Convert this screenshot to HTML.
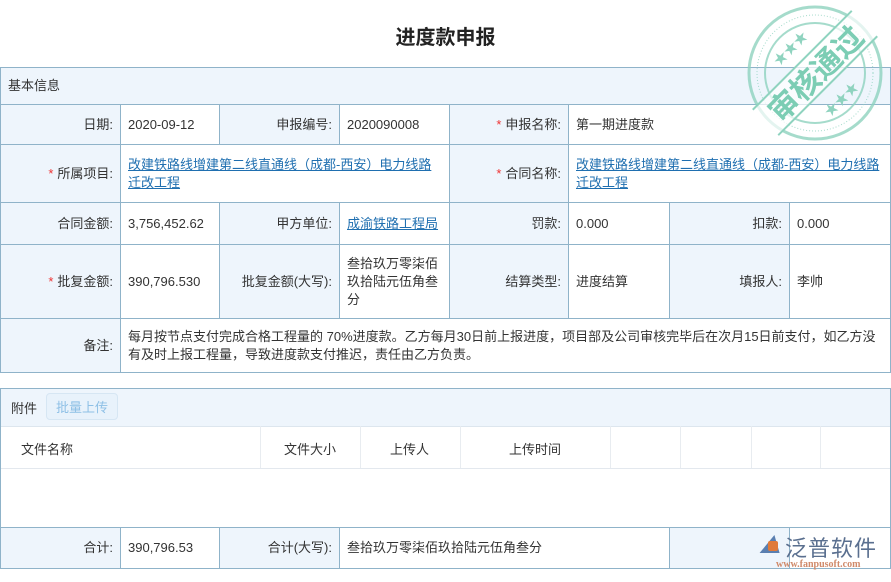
<!DOCTYPE html>
<html><head><meta charset="utf-8"><style>
body{margin:0;width:891px;height:582px;background:#fff;font-family:"Liberation Sans","Noto Sans CJK SC",sans-serif;font-size:13px;color:#333;position:relative;overflow:hidden}
.c{position:absolute;box-sizing:border-box;border:1px solid #8fb3c9;display:flex;align-items:center;padding:0 7px;line-height:18px}
.l{background:#eef5fc;justify-content:flex-end;text-align:right}
.v{background:#fff}
.r{color:#e33;margin-right:4px}
a{color:#1f6fb0;text-decoration:underline}
.t{position:absolute;font-size:13px}
</style></head><body>
<div style="position:absolute;left:0;top:21px;width:891px;text-align:center;font-size:20px;font-weight:bold;color:#222">进度款申报</div>

<div class="c l" style="left:0;top:67px;width:891px;height:38px;justify-content:flex-start">基本信息</div>

<div class="c l" style="left:0;top:104px;width:121px;height:41px">日期:</div>
<div class="c v" style="left:120px;top:104px;width:100px;height:41px">2020-09-12</div>
<div class="c l" style="left:219px;top:104px;width:121px;height:41px">申报编号:</div>
<div class="c v" style="left:339px;top:104px;width:111px;height:41px">2020090008</div>
<div class="c l" style="left:449px;top:104px;width:120px;height:41px"><span class="r">*</span>申报名称:</div>
<div class="c v" style="left:568px;top:104px;width:323px;height:41px">第一期进度款</div>

<div class="c l" style="left:0;top:144px;width:121px;height:59px"><span class="r">*</span>所属项目:</div>
<div class="c v" style="left:120px;top:144px;width:330px;height:59px"><a>改建铁路线增建第二线直通线（成都-西安）电力线路迁改工程</a></div>
<div class="c l" style="left:449px;top:144px;width:120px;height:59px"><span class="r">*</span>合同名称:</div>
<div class="c v" style="left:568px;top:144px;width:323px;height:59px"><a>改建铁路线增建第二线直通线（成都-西安）电力线路迁改工程</a></div>

<div class="c l" style="left:0;top:202px;width:121px;height:43px">合同金额:</div>
<div class="c v" style="left:120px;top:202px;width:100px;height:43px">3,756,452.62</div>
<div class="c l" style="left:219px;top:202px;width:121px;height:43px">甲方单位:</div>
<div class="c v" style="left:339px;top:202px;width:111px;height:43px"><a>成渝铁路工程局</a></div>
<div class="c l" style="left:449px;top:202px;width:120px;height:43px">罚款:</div>
<div class="c v" style="left:568px;top:202px;width:102px;height:43px">0.000</div>
<div class="c l" style="left:669px;top:202px;width:121px;height:43px">扣款:</div>
<div class="c v" style="left:789px;top:202px;width:102px;height:43px">0.000</div>

<div class="c l" style="left:0;top:244px;width:121px;height:75px"><span class="r">*</span>批复金额:</div>
<div class="c v" style="left:120px;top:244px;width:100px;height:75px">390,796.530</div>
<div class="c l" style="left:219px;top:244px;width:121px;height:75px">批复金额(大写):</div>
<div class="c v" style="left:339px;top:244px;width:111px;height:75px">叁拾玖万零柒佰玖拾陆元伍角叁分</div>
<div class="c l" style="left:449px;top:244px;width:120px;height:75px">结算类型:</div>
<div class="c v" style="left:568px;top:244px;width:102px;height:75px">进度结算</div>
<div class="c l" style="left:669px;top:244px;width:121px;height:75px">填报人:</div>
<div class="c v" style="left:789px;top:244px;width:102px;height:75px">李帅</div>

<div class="c l" style="left:0;top:318px;width:121px;height:55px">备注:</div>
<div class="c v" style="left:120px;top:318px;width:771px;height:55px">每月按节点支付完成合格工程量的 70%进度款。乙方每月30日前上报进度，项目部及公司审核完毕后在次月15日前支付，如乙方没有及时上报工程量，导致进度款支付推迟，责任由乙方负责。</div>

<div style="position:absolute;left:0;top:388px;width:891px;height:181px;box-sizing:border-box;border:1px solid #8fb3c9"></div>
<div style="position:absolute;left:1px;top:389px;width:889px;height:37px;background:#eef5fc;border-bottom:1px solid #dde6ee"></div>
<div class="t" style="left:11px;top:398px">附件</div>
<div style="position:absolute;left:46px;top:393px;width:72px;height:27px;border:1px solid #d6e6f3;border-radius:4px;background:#e8f2fb;color:#8ec0e6;text-align:center;line-height:27px;box-sizing:border-box">批量上传</div>
<div style="position:absolute;left:1px;top:468px;width:889px;border-top:1px solid #e3e8ee"></div>
<div style="position:absolute;left:260px;top:426px;height:42px;border-left:1px solid #e8ecf0"></div>
<div style="position:absolute;left:360px;top:426px;height:42px;border-left:1px solid #e8ecf0"></div>
<div style="position:absolute;left:460px;top:426px;height:42px;border-left:1px solid #e8ecf0"></div>
<div style="position:absolute;left:610px;top:426px;height:42px;border-left:1px solid #e8ecf0"></div>
<div style="position:absolute;left:680px;top:426px;height:42px;border-left:1px solid #e8ecf0"></div>
<div style="position:absolute;left:751px;top:426px;height:42px;border-left:1px solid #e8ecf0"></div>
<div style="position:absolute;left:820px;top:426px;height:42px;border-left:1px solid #e8ecf0"></div>
<div class="t" style="left:21px;top:439px">文件名称</div>
<div class="t" style="left:284px;top:439px">文件大小</div>
<div class="t" style="left:390px;top:439px">上传人</div>
<div class="t" style="left:509px;top:439px">上传时间</div>

<div class="c l" style="left:0;top:527px;width:121px;height:42px">合计:</div>
<div class="c v" style="left:120px;top:527px;width:100px;height:42px">390,796.53</div>
<div class="c l" style="left:219px;top:527px;width:121px;height:42px">合计(大写):</div>
<div class="c v" style="left:339px;top:527px;width:331px;height:42px">叁拾玖万零柒佰玖拾陆元伍角叁分</div>
<div class="c l" style="left:669px;top:527px;width:121px;height:42px"></div>
<div class="c v" style="left:789px;top:527px;width:102px;height:42px"></div>

<div style="position:absolute;left:762px;top:535px;width:0;height:0;border-left:10px solid transparent;border-right:10px solid transparent;border-bottom:18px solid #5a7fb0;transform:skewX(-15deg)"></div>
<div style="position:absolute;left:768px;top:541px;width:10px;height:10px;background:#e07a3a;border-radius:2px"></div>
<div style="position:absolute;left:785px;top:531px;font-size:22px;color:#5a6f8f;letter-spacing:1px">泛普软件</div>
<div style="position:absolute;left:776px;top:559px;font-size:10px;color:#d08a6a;font-family:'Liberation Serif',serif;font-weight:bold">www.fanpusoft.com</div>

<svg style="position:absolute;left:745px;top:3px" width="140" height="140" viewBox="0 0 140 140">
<g fill="none" stroke="#8fd3bf" opacity="0.8">
<circle cx="70" cy="70" r="66" stroke-width="3"/>
<circle cx="70" cy="70" r="58" stroke-width="1" stroke-dasharray="1 2"/>
<circle cx="70" cy="70" r="50" stroke-width="2"/>
</g>
<g transform="rotate(-45 70 70)">
<rect x="0" y="52" width="140" height="36" fill="#fff" opacity="0.7"/>
<line x1="0" y1="52" x2="140" y2="52" stroke="#8fd3bf" stroke-width="2"/>
<line x1="0" y1="88" x2="140" y2="88" stroke="#8fd3bf" stroke-width="2"/>
<text x="70" y="82" text-anchor="middle" font-size="30" font-weight="bold" fill="#7ccdb4" font-family="Noto Sans CJK SC,sans-serif">审核通过</text>
<text x="70" y="40" text-anchor="middle" font-size="14" fill="#8fd3bf">★★★</text>
<text x="70" y="112" text-anchor="middle" font-size="14" fill="#8fd3bf">★★★</text>
</g>
</svg>
</body></html>
